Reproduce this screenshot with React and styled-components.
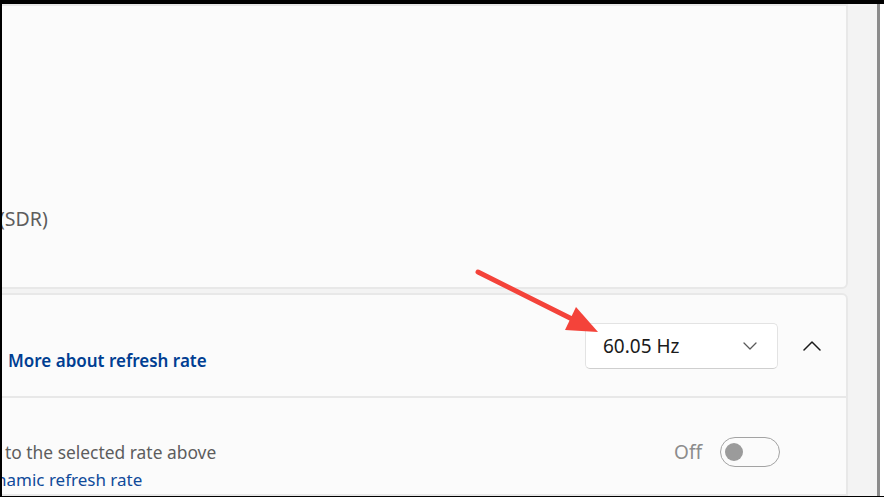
import React from "react"
import styled, { createGlobalStyle } from "styled-components"

const GlobalStyle = createGlobalStyle`
  html, body {
    margin: 0;
    padding: 0;
    background: #000;
    overflow: hidden;
  }
  body {
    font-family: "Segoe UI", "Noto Sans", "Open Sans", sans-serif;
  }
`

const Frame = styled.div`
  position: relative;
  width: 884px;
  height: 497px;
  box-sizing: border-box;
  padding: 4px 0 1px 2px;
  display: flex;
`

const Content = styled.main`
  flex: 1;
  background: #f3f3f3;
  overflow: hidden;
  display: flex;
  flex-direction: column;
  gap: 4px;
  padding-right: 29px;
`

const Scrollbar = styled.div`
  width: 4px;
  border-left: 3px solid #8b8b8b;
  background: #fff;
`

const Card = styled.section`
  margin-left: -20px;
  background: #fbfbfb;
  border: 2px solid #e8e8e8;
  border-radius: ${({ $open }) => ($open ? "6px 6px 0 0" : "0 0 6px 6px")};
  flex: ${({ $grow }) => ($grow ? 1 : "none")};
  height: ${({ $height }) => ($height ? `${$height}px` : "auto")};
  box-sizing: border-box;
  display: flex;
  flex-direction: column;
`

const InfoBlock = styled.div`
  flex: 1;
  display: flex;
  flex-direction: column;
  justify-content: flex-end;
  padding: 0 0 55px 18px;
`

const Line = styled.div`
  display: flex;
  align-items: baseline;
  white-space: pre;
  font-size: ${({ $size }) => $size || 17.4}px;
  line-height: ${({ $lh }) => $lh || 27}px;
  font-weight: ${({ $weight }) => $weight || 400};
  color: ${({ $color }) => $color || "#5d5d5d"};
  margin-left: ${({ $shift }) => $shift || 0}px;
`

/* text that runs off the left edge of the shot: zero width, spills leftwards */
const Before = styled.span`
  display: inline-flex;
  justify-content: flex-end;
  width: 0;
  white-space: pre;
  color: ${({ $color }) => $color || "#5d5d5d"};
  font-weight: 400;
  & > span {
    flex-shrink: 0;
    white-space: pre;
  }
`

const HeaderRow = styled.div`
  height: 101px;
  display: flex;
  align-items: center;
  padding: 0 18px 0 18px;
  border-bottom: 2px solid #e8e8e8;
`

const HeaderText = styled.div`
  flex: 1;
  padding-top: 29px;
`

const Select = styled.button`
  width: 193px;
  height: 46px;
  box-sizing: border-box;
  display: flex;
  align-items: center;
  justify-content: space-between;
  padding: 0 20px 0 17px;
  background: #fff;
  border: 1px solid #e3e3e3;
  border-bottom-color: #cfcfcf;
  border-radius: 5px;
  font-family: inherit;
  font-size: 19px;
  color: #1b1b1b;
  margin-right: 18px;
`

const IconButton = styled.button`
  width: 32px;
  height: 32px;
  padding: 0;
  border: none;
  background: transparent;
  display: flex;
  align-items: center;
  justify-content: center;
`

const SubRow = styled.div`
  display: flex;
  align-items: flex-start;
  padding: 41px 66px 0 18px;
`

const SubText = styled.div`
  flex: 1;
`

const ToggleGroup = styled.div`
  display: flex;
  align-items: center;
  gap: 18px;
  margin-top: -2px;
`

const StateLabel = styled.span`
  font-size: 19px;
  color: #8c8c8c;
`

const Toggle = styled.div`
  width: 60px;
  height: 30px;
  box-sizing: border-box;
  border: 1.5px solid #a3a3a3;
  border-radius: 15px;
  display: flex;
  align-items: center;
  padding-left: 4px;
`

const Knob = styled.span`
  width: 18px;
  height: 18px;
  border-radius: 50%;
  background: #9b9b9b;
`

const Annotation = styled.svg`
  position: absolute;
  top: 0;
  left: 0;
  pointer-events: none;
`

const ChevronDown = () => (
  <svg width="14" height="8" viewBox="0 0 14 8" fill="none">
    <path d="M1 1l6 6 6-6" stroke="#5a5a5a" strokeWidth="1.3" strokeLinecap="round" strokeLinejoin="round" />
  </svg>
)

const ChevronUp = () => (
  <svg width="18" height="10" viewBox="0 0 18 10" fill="none">
    <path d="M1 9l8-8 8 8" stroke="#1a1a1a" strokeWidth="1.5" strokeLinecap="round" strokeLinejoin="round" />
  </svg>
)

export default function App() {
  return (
    <>
      <GlobalStyle />
      <Frame>
        <Content>
          <Card $height={285}>
            <InfoBlock>
              <Line $size={19.5} $shift={-3}>
                <Before>
                  <span>Standard dynamic range </span>
                </Before>
                (SDR)
              </Line>
            </InfoBlock>
          </Card>
          <Card $open $grow>
            <HeaderRow>
              <HeaderText>
                <Line $size={17} $weight={600} $color="#003e92" $shift={6}>
                  <Before>
                    <span>A higher rate gives smoother motion, but also uses more power   </span>
                  </Before>
                  More about refresh rate
                </Line>
              </HeaderText>
              <Select>
                60.05 Hz
                <ChevronDown />
              </Select>
              <IconButton aria-label="Collapse">
                <ChevronUp />
              </IconButton>
            </HeaderRow>
            <SubRow>
              <SubText>
                <Line $shift={3}>
                  <Before>
                    <span>To help save power, Windows dynamically adjusts the refresh rate up </span>
                  </Before>
                  to the selected rate above
                </Line>
                <Line $size={17} $color="#0f4a9a" $shift={-6}>
                  <Before $color="#0f4a9a">
                    <span>More about dy</span>
                  </Before>
                  namic refresh rate
                </Line>
              </SubText>
              <ToggleGroup>
                <StateLabel>Off</StateLabel>
                <Toggle>
                  <Knob />
                </Toggle>
              </ToggleGroup>
            </SubRow>
          </Card>
        </Content>
        <Scrollbar />
        <Annotation width="884" height="497" viewBox="0 0 884 497">
          <line x1="478" y1="272" x2="572" y2="319" stroke="#f4433a" strokeWidth="5" strokeLinecap="round" />
          <polygon points="598,332 576,307 565,330" fill="#f4433a" />
        </Annotation>
      </Frame>
    </>
  )
}
